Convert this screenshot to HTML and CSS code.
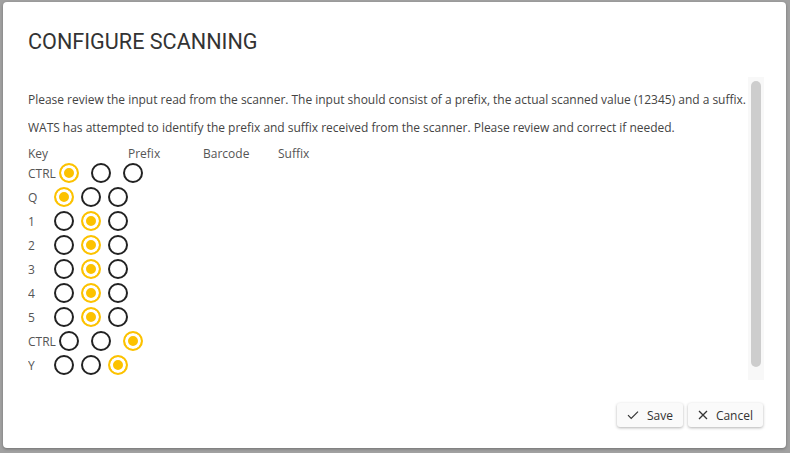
FILE: index.html
```html
<!DOCTYPE html>
<html lang="en">
<head>
    <meta charset="UTF-8">
    <meta name="viewport" content="width=device-width, initial-scale=1.0">
    <title>Configure Scanning</title>
    <link rel="stylesheet" href="styles.css">
</head>
<body>
    <div class="dialog">
        <h1 class="dialog-title">CONFIGURE SCANNING</h1>

        <div class="dialog-body">
            <div class="dialog-content">
                <p class="dialog-text">Please review the input read from the scanner. The input should consist of a prefix, the actual scanned value (12345) and a suffix.</p>
                <p class="dialog-text">WATS has attempted to identify the prefix and suffix received from the scanner. Please review and correct if needed.</p>

                <div class="key-header">
                    <span class="col-key">Key</span>
                    <span class="col-part">Prefix</span>
                    <span class="col-part">Barcode</span>
                    <span class="col-part">Suffix</span>
                </div>

                <div class="key-list">
                    <div class="key-row wide">
                        <span class="key-name">CTRL</span>
                        <input type="radio" name="k0" checked>
                        <input type="radio" name="k0">
                        <input type="radio" name="k0">
                    </div>
                    <div class="key-row">
                        <span class="key-name">Q</span>
                        <input type="radio" name="k1" checked>
                        <input type="radio" name="k1">
                        <input type="radio" name="k1">
                    </div>
                    <div class="key-row">
                        <span class="key-name">1</span>
                        <input type="radio" name="k2">
                        <input type="radio" name="k2" checked>
                        <input type="radio" name="k2">
                    </div>
                    <div class="key-row">
                        <span class="key-name">2</span>
                        <input type="radio" name="k3">
                        <input type="radio" name="k3" checked>
                        <input type="radio" name="k3">
                    </div>
                    <div class="key-row">
                        <span class="key-name">3</span>
                        <input type="radio" name="k4">
                        <input type="radio" name="k4" checked>
                        <input type="radio" name="k4">
                    </div>
                    <div class="key-row">
                        <span class="key-name">4</span>
                        <input type="radio" name="k5">
                        <input type="radio" name="k5" checked>
                        <input type="radio" name="k5">
                    </div>
                    <div class="key-row">
                        <span class="key-name">5</span>
                        <input type="radio" name="k6">
                        <input type="radio" name="k6" checked>
                        <input type="radio" name="k6">
                    </div>
                    <div class="key-row wide">
                        <span class="key-name">CTRL</span>
                        <input type="radio" name="k7">
                        <input type="radio" name="k7">
                        <input type="radio" name="k7" checked>
                    </div>
                    <div class="key-row">
                        <span class="key-name">Y</span>
                        <input type="radio" name="k8">
                        <input type="radio" name="k8">
                        <input type="radio" name="k8" checked>
                    </div>
                </div>
            </div>

            <!-- scrollbar drawn by hand, the headless browser hides native ones -->
            <div class="scrollbar">
                <div class="scrollbar-thumb"></div>
            </div>
        </div>

        <div class="dialog-footer">
            <button class="dialog-btn">
                <svg width="12" height="10" viewBox="0 0 12 10"><path d="M1 5.2 L4.2 8.4 L11 1.6" fill="none" stroke="#333" stroke-width="1.2"/></svg>
                Save
            </button>
            <button class="dialog-btn">
                <svg width="10" height="10" viewBox="0 0 10 10"><path d="M1 1 L9 9 M9 1 L1 9" fill="none" stroke="#333" stroke-width="1.3"/></svg>
                Cancel
            </button>
        </div>
    </div>
</body>
</html>
```

FILE: styles.css
```css
* {
    box-sizing: border-box;
    margin: 0;
    padding: 0;
}

html, body {
    height: 100%;
}

body {
    background-color: #a1a1a1;
    padding: 2px 4px 5px 3px;
    font-family: 'Open Sans', sans-serif;
    font-size: 12px;
    color: #444;
}

.dialog {
    height: 100%;
    background-color: #fff;
    border-radius: 4px;
    box-shadow: 0 1px 3px rgba(0, 0, 0, 0.3);
    display: flex;
    flex-direction: column;
    padding: 0 22px 21px 25px;
}

.dialog-title {
    font-family: 'Roboto', sans-serif;
    font-weight: 400;
    font-size: 21.6px;
    line-height: 26px;
    color: #333;
    margin-top: 27px;
}

.dialog-body {
    display: flex;
    height: 303px;
    margin-top: 22px;
}

.dialog-content {
    flex: 1;
    overflow: hidden;
    padding-top: 15px;
}

.scrollbar {
    width: 16px;
    background-color: #f8f8f8;
    padding: 4px 3px 13px 3px;
}

.scrollbar-thumb {
    height: 100%;
    background-color: #cdcdcd;
    border-radius: 5px;
}

.dialog-text {
    line-height: 16px;
    margin-bottom: 12px;
    white-space: nowrap;
    letter-spacing: -0.02px;
}

.key-header {
    display: flex;
    line-height: 14px;
    color: #555;
    margin-top: -1px;
}

.col-key {
    width: 100px;
}

.col-part {
    width: 75px;
}

.key-row {
    display: flex;
    align-items: center;
    height: 24px;
    color: #555;
}

.key-name {
    min-width: 23px;
    margin-right: 3px;
}

.key-row input[type="radio"] {
    appearance: none;
    -webkit-appearance: none;
    width: 20px;
    height: 20px;
    border: 2px solid #222;
    border-radius: 50%;
    background-color: #fff;
    margin: 0;
}

.key-row input[type="radio"] + input[type="radio"] {
    margin-left: 7px;
}

.key-row.wide input[type="radio"] + input[type="radio"] {
    margin-left: 12px;
}

.key-row input[type="radio"]:checked {
    border-color: #fcc200;
    background-color: #fcc200;
    box-shadow: inset 0 0 0 3px #fff;
}

.dialog-footer {
    display: flex;
    justify-content: flex-end;
    gap: 5px;
    margin-top: auto;
    padding-right: 1px;
}

.dialog-btn {
    display: flex;
    align-items: center;
    gap: 8px;
    height: 24px;
    padding: 0 10px;
    background-color: #fafafa;
    border: none;
    border-radius: 3px;
    box-shadow: 0 1px 3px rgba(0, 0, 0, 0.3);
    font-family: 'Open Sans', sans-serif;
    font-size: 12px;
    color: #333;
    cursor: pointer;
}
```
